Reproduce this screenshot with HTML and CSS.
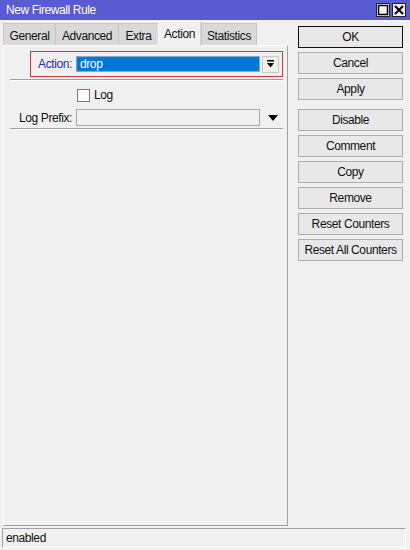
FILE: index.html
```html
<!DOCTYPE html>
<html lang="en">
<head>
  <meta charset="UTF-8" />
  <title>New Firewall Rule</title>
  <link rel="stylesheet" href="styles.css">
</head>
<body>
  <div class="window">
    <div class="titlebar">
      <span class="title">New Firewall Rule</span>
      <div class="win-buttons">
        <span class="win-btn">
          <svg width="12" height="12" viewBox="0 0 12 12"><rect x="1.5" y="1.5" width="9" height="9" fill="none" stroke="#000" stroke-width="1.5"/></svg>
        </span>
        <span class="win-btn">
          <svg width="12" height="12" viewBox="0 0 12 12"><path d="M2 2 L10 10 M10 2 L2 10" stroke="#000" stroke-width="2"/></svg>
        </span>
      </div>
    </div>

    <div class="main">
      <div class="left">
        <div class="tabs">
          <div class="tab tab-general">General</div>
          <div class="tab tab-advanced">Advanced</div>
          <div class="tab tab-extra">Extra</div>
          <div class="tab tab-action active">Action</div>
          <div class="tab tab-stats">Statistics</div>
        </div>

        <div class="panel">
          <div class="row selected">
            <label class="label blue">Action:</label>
            <div class="field chosen">drop</div>
            <span class="drop-btn">
              <svg width="9" height="9" viewBox="0 0 9 9"><rect x="1" y="0" width="7" height="1.5" fill="#000"/><path d="M1 3 L8 3 L4.5 7.5 Z" fill="#000"/></svg>
            </span>
          </div>
          <div class="sep"></div>

          <div class="row check-row">
            <span class="checkbox"></span>
            <span class="check-text">Log</span>
          </div>

          <div class="row">
            <label class="label">Log Prefix:</label>
            <div class="field"></div>
            <span class="arrow">
              <svg width="10" height="6" viewBox="0 0 10 6"><path d="M0 0 L10 0 L5 6 Z" fill="#000"/></svg>
            </span>
          </div>
          <div class="sep"></div>
        </div>
      </div>

      <div class="buttons">
        <button class="btn default">OK</button>
        <button class="btn">Cancel</button>
        <button class="btn">Apply</button>
        <button class="btn group">Disable</button>
        <button class="btn">Comment</button>
        <button class="btn">Copy</button>
        <button class="btn">Remove</button>
        <button class="btn">Reset Counters</button>
        <button class="btn">Reset All Counters</button>
      </div>
    </div>

    <div class="statusbar">enabled</div>
  </div>
</body>
</html>
```

FILE: styles.css
```css
* {
  box-sizing: border-box;
}

body {
  margin: 0;
  font-family: "Liberation Sans", Arial, sans-serif;
  font-size: 12px;
  letter-spacing: -0.4px;
  color: #111;
  background: #f0f0f0;
}

.window {
  width: 410px;
  height: 550px;
  display: flex;
  flex-direction: column;
  background: #f0f0f0;
}

/* title bar */
.titlebar {
  height: 20px;
  background: #5a5ad2;
  display: flex;
  align-items: center;
  justify-content: space-between;
  padding: 0 4px 0 6px;
}

.title {
  color: #fff;
}

.win-buttons {
  display: flex;
  gap: 2px;
}

.win-btn {
  width: 14px;
  height: 14px;
  background: #f0f0f0;
  border: 1px solid #222;
  display: flex;
  align-items: center;
  justify-content: center;
}

/* body */
.main {
  flex: 1;
  display: flex;
}

.left {
  width: 288px;
  display: flex;
  flex-direction: column;
  padding: 2px 0 0 3px;
}

/* tab strip */
.tabs {
  display: flex;
  height: 23px;
  align-items: flex-end;
}

.tab {
  height: 22px;
  padding-top: 2px;
  line-height: 20px;
  text-align: center;
  background: #d9d9d9;
  border-left: 1px solid #c4c4c4;
  border-top: 1px solid #c4c4c4;
}

.tab-general { width: 52px; }
.tab-advanced { width: 63px; }
.tab-extra { width: 40px; }
.tab-action { width: 43px; }
.tab-stats {
  width: 56px;
  border-right: 1px solid #c4c4c4;
}

.tab.active {
  height: 25px;
  padding-top: 2px;
  line-height: 21px;
  background: #f0f0f0;
  border-color: #fafafa;
  border-right: 1px solid #d6d6d6;
  margin-bottom: -1px;
  position: relative;
}

.panel {
  flex: 1;
  border-top: 1px solid #fcfcfc;
  border-left: 1px solid #fcfcfc;
  border-right: 1px solid #a0a0a0;
  border-bottom: 1px solid #a0a0a0;
  padding: 5px 4px 0 0;
}

.row {
  display: flex;
  align-items: center;
  height: 17px;
}

.label {
  width: 72px;
  text-align: right;
  padding-right: 4px;
}

.blue {
  color: #2b2bc0;
}

.row.selected {
  height: 26px;
  border: 1px solid #d0393e;
  margin-left: 26px;
}

.row.selected .label {
  width: 45px;
}

.field {
  width: 184px;
  height: 17px;
  border: 1px solid #a8a8a8;
  background: #f0f0f0;
  padding: 0 3px;
  line-height: 15px;
}

.field.chosen {
  background: #0078d7;
  color: #fff;
  border-color: #8fa7c0;
  height: 16px;
}

.drop-btn {
  width: 17px;
  height: 17px;
  margin-left: 2px;
  background: #f0f0f0;
  border: 1px solid #c8c8c8;
  display: flex;
  align-items: center;
  justify-content: center;
}

.arrow {
  margin-left: 8px;
  display: flex;
  align-items: center;
}

.sep {
  height: 2px;
  margin: 2px 0 0 6px;
  border-top: 1px solid #a0a0a0;
  border-bottom: 1px solid #fcfcfc;
}

.check-row {
  margin-top: 7px;
  padding-left: 73px;
  height: 14px;
}

.checkbox {
  width: 13px;
  height: 13px;
  border: 1px solid #7a7a7a;
  background: #fff;
  margin-right: 4px;
}

.check-row + .row {
  margin-top: 7px;
}

/* right column */
.buttons {
  display: flex;
  flex-direction: column;
  gap: 4px;
  padding: 6px 0 0 10px;
}

.btn {
  width: 105px;
  height: 22px;
  font-family: inherit;
  font-size: 12px;
  letter-spacing: -0.4px;
  background: #e8e8e8;
  border: 1px solid #adadad;
  padding: 0;
  color: #111;
}

.btn.default {
  border: 1px solid #111;
}

.btn.group {
  margin-top: 5px;
}

.statusbar {
  height: 20px;
  margin: 2px 4px 2px 2px;
  border-top: 1px solid #a0a0a0;
  border-left: 1px solid #a0a0a0;
  border-right: 1px solid #fcfcfc;
  border-bottom: 1px solid #fcfcfc;
  padding-left: 3px;
  line-height: 18px;
}
```
